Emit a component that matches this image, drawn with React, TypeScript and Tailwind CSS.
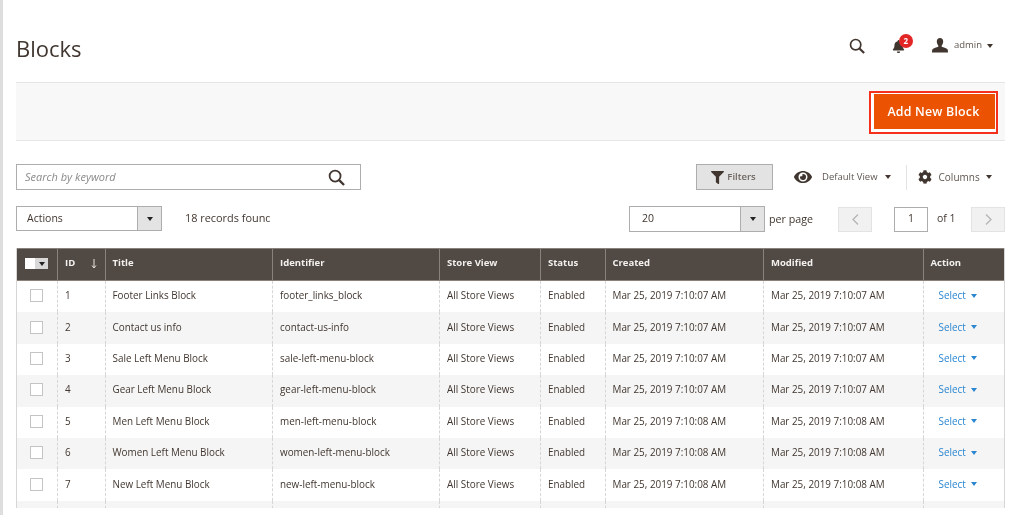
import type { ReactNode } from "react"
import { FaBell, FaCog, FaEye, FaFilter } from "react-icons/fa"

const rows = [
  ["1", "Footer Links Block", "footer_links_block", "7:10:07 AM"],
  ["2", "Contact us info", "contact-us-info", "7:10:07 AM"],
  ["3", "Sale Left Menu Block", "sale-left-menu-block", "7:10:07 AM"],
  ["4", "Gear Left Menu Block", "gear-left-menu-block", "7:10:07 AM"],
  ["5", "Men Left Menu Block", "men-left-menu-block", "7:10:08 AM"],
  ["6", "Women Left Menu Block", "women-left-menu-block", "7:10:08 AM"],
  ["7", "New Left Menu Block", "new-left-menu-block", "7:10:08 AM"],
]

const gridCols = "grid grid-cols-[41px_47.5px_167.5px_167px_101px_64.5px_158.5px_159.5px_82.5px]"

function Caret({ className = "border-t-[#41362f]" }: { className?: string }) {
  return <span className={"inline-block w-0 h-0 border-x-[3.5px] border-x-transparent border-t-[4px] " + className} />
}

function SearchIcon({ size }: { size: number }) {
  return (
    <svg width={size} height={size} viewBox="0 0 18 18" fill="none" stroke="#41362f" strokeWidth="1.9">
      <circle cx="7.5" cy="7.5" r="5.8" />
      <path d="M11.8 11.8 L17 17" strokeWidth="2.4" />
    </svg>
  )
}

function UserIcon() {
  return (
    <svg width="16" height="15" viewBox="0 0 16 15" fill="#41362f">
      <path d="M8 0c2 0 3.2 1.4 3.2 3.6 0 1.6-.7 3-1.500 3.900v1.200c1.600.6 4.800 1.200 5.800 2.600.3.5.5 1.600.5 3.200H0c0-1.600.2-2.700.5-3.200 1-1.400 4.200-2 5.800-2.600V7.500C5.500 6.600 4.800 5.200 4.800 3.600 4.800 1.400 6 0 8 0z" />
    </svg>
  )
}

function Chevron({ d }: { d: string }) {
  return (
    <svg width="7" height="11" viewBox="0 0 7 11" fill="none" stroke="#b5b5b5" strokeWidth="1.3">
      <path d={d} />
    </svg>
  )
}

function HeaderCell({ children, last }: { children: ReactNode; last?: boolean }) {
  return (
    <div className={"flex items-center pl-[7px] pb-[2px] font-bold text-[9.5px] text-[#f3f1ef] " + (last ? "" : "border-r border-[#8a817b]")}>
      {children}
    </div>
  )
}

function Cell({ children, last }: { children?: ReactNode; last?: boolean }) {
  return (
    <div className={"flex items-center pl-[7px] pb-[2px] whitespace-nowrap " + (last ? "" : "border-r border-dashed border-[#d6d6d6]")}>
      {children}
    </div>
  )
}

export default function App() {
  return (
    <div className="flex w-[1024px] h-[515px] overflow-hidden bg-white text-[#41362f] text-[9.9px] blur-[0.35px]" style={{ fontFamily: '"Open Sans", sans-serif' }}>
      <div className="w-[3px] shrink-0 bg-[#dedede]" />
      <main className="w-[989px] ml-[13px] shrink-0">
        <header className="flex items-center justify-between h-[82px]">
          <h1 className="text-[22px] text-[#41362f] mt-[15px]">Blocks</h1>
          <div className="flex items-center mt-[9px] mr-[12px]">
            <SearchIcon size={16} />
            <div className="relative ml-[27px] mt-[2px] text-[#41362f]">
              <FaBell size={13} />
              <span className="absolute -top-[6px] left-[7px] flex items-center justify-center w-[14px] h-[14px] rounded-full bg-[#e22626] text-white text-[8px] font-bold">2</span>
            </div>
            <div className="ml-[27px]"><UserIcon /></div>
            <span className="ml-[6px] text-[9.5px] text-[#5f5650]">admin</span>
            <span className="ml-[5px] flex"><Caret /></span>
          </div>
        </header>

        <section className="flex items-center justify-end h-[59px] pr-[7px] bg-[#f8f8f8] border-y border-[#e6e6e6]">
          <div className="border-2 border-[#f5301c] pl-[3px] pr-[1px] pt-[1px] pb-[3px] mt-[1px] bg-white">
            <button className="flex items-center justify-center w-[121px] h-[35px] pt-[2px] pr-[2px] bg-[#eb5202] text-white font-semibold text-[12.4px] tracking-[0.2px]">
              Add New Block
            </button>
          </div>
        </section>

        <section className="flex items-center h-[26px] mt-[23px]">
          <div className="flex items-center justify-between w-[345px] h-[26px] pl-[8px] pr-[15px] border border-[#adadad]">
            <span className="italic text-[11px] text-[#8a8a8a]">Search by keyword</span>
            <SearchIcon size={17} />
          </div>
          <button className="flex items-center justify-center gap-[3px] w-[77px] h-[26px] ml-[335px] pr-[2px] bg-[#e3e3e3] border border-[#adadad] font-semibold text-[9.5px] text-[#6d6560]">
            <FaFilter size={13} className="text-[#41362f]" />
            Filters
          </button>
          <FaEye size={18} className="ml-[21px] text-[#41362f]" />
          <span className="ml-[10px] text-[9.5px] text-[#5f5650]">Default View</span>
          <span className="ml-[7px] flex"><Caret /></span>
          <div className="w-px h-[25px] ml-[15px] bg-[#e3e3e3]" />
          <FaCog size={14} className="ml-[11px] text-[#41362f]" />
          <span className="ml-[7px] text-[10px] text-[#5f5650]">Columns</span>
          <span className="ml-[6px] flex"><Caret /></span>
        </section>

        <section className="flex items-center h-[26px] mt-[16px]">
          <div className="flex shrink-0 w-[146px] h-[25px] -mt-[1px] border border-[#adadad]">
            <span className="flex-1 flex items-center pl-[10px] text-[10.5px]">Actions</span>
            <span className="flex items-center justify-center w-[24px] bg-[#e3e3e3] border-l border-[#adadad]"><Caret className="border-t-[#222222]" /></span>
          </div>
          <div className="shrink-0 w-[85px] ml-[23px] -mt-[1px] overflow-hidden whitespace-nowrap text-[10.9px]">18 records found</div>
          <div className="flex shrink-0 w-[136px] h-[26px] ml-[359px] border border-[#adadad]">
            <span className="flex-1 flex items-center pl-[12px] text-[10.5px]">20</span>
            <span className="flex items-center justify-center w-[24px] bg-[#e3e3e3] border-l border-[#adadad]"><Caret className="border-t-[#222222]" /></span>
          </div>
          <span className="shrink-0 w-[44px] ml-[4px] whitespace-nowrap text-[10.7px]">per page</span>
          <div className="flex shrink-0 items-center justify-center w-[34px] h-[25px] ml-[25px] bg-[#f1f1f1] border border-[#e3e3e3]"><Chevron d="M6 .5 1 5.500 6 10.500" /></div>
          <div className="flex shrink-0 items-center justify-center w-[34px] h-[25px] ml-[22px] border border-[#adadad] text-[10.5px]">1</div>
          <span className="shrink-0 w-[18px] ml-[9px] whitespace-nowrap text-[10.5px]">of 1</span>
          <div className="flex shrink-0 items-center justify-center w-[34px] h-[25px] ml-[16px] bg-[#f1f1f1] border border-[#e3e3e3]"><Chevron d="M1 .5 6 5.500 1 10.500" /></div>
        </section>

        <section className="mt-[16px] h-[260px] overflow-hidden border-x border-[#d6d6d6] w-[989px]">
          <div className={gridCols + " h-[33px] bg-[#514943] border-y border-[#8a817b]"}>
            <HeaderCell>
              <span className="flex items-center h-[11px] w-[23px] ml-[1px] bg-white">
                <span className="flex items-center justify-center w-[13px] h-[11px] ml-[10px] bg-[#d8d8d8]"><Caret className="border-t-[#222222]" /></span>
              </span>
            </HeaderCell>
            <HeaderCell>
              <span className="flex-1">ID</span>
              <svg width="6" height="10" viewBox="0 0 6 10" fill="none" stroke="#e8e4e0" strokeWidth="1" className="mr-[8px]"><path d="M3 0v8M1 6.500 3 9l2-2.500" /></svg>
            </HeaderCell>
            <HeaderCell>Title</HeaderCell>
            <HeaderCell>Identifier</HeaderCell>
            <HeaderCell>Store View</HeaderCell>
            <HeaderCell>Status</HeaderCell>
            <HeaderCell>Created</HeaderCell>
            <HeaderCell>Modified</HeaderCell>
            <HeaderCell last>Action</HeaderCell>
          </div>
          {rows.map((r, i) => (
            <div key={r[0]} className={gridCols + " h-[31.4px] " + (i % 2 ? "bg-[#f5f5f5]" : "bg-white")}>
              <Cell><span className="w-[13px] h-[13px] ml-[6px] bg-white border border-[#c4c4c4]" /></Cell>
              <Cell>{r[0]}</Cell>
              <Cell>{r[1]}</Cell>
              <Cell>{r[2]}</Cell>
              <Cell>All Store Views</Cell>
              <Cell>Enabled</Cell>
              <Cell>Mar 25, 2019 {r[3]}</Cell>
              <Cell>Mar 25, 2019 {r[3]}</Cell>
              <Cell last>
                <span className="ml-[8px] text-[#2a86d0]">Select</span>
                <span className="ml-[5px] flex"><Caret className="border-t-[#2a86d0]" /></span>
              </Cell>
            </div>
          ))}
          <div className={gridCols + " h-[31.4px] bg-[#f5f5f5]"}>
            <Cell /><Cell /><Cell /><Cell /><Cell /><Cell /><Cell /><Cell /><Cell last />
          </div>
        </section>
      </main>
    </div>
  )
}
